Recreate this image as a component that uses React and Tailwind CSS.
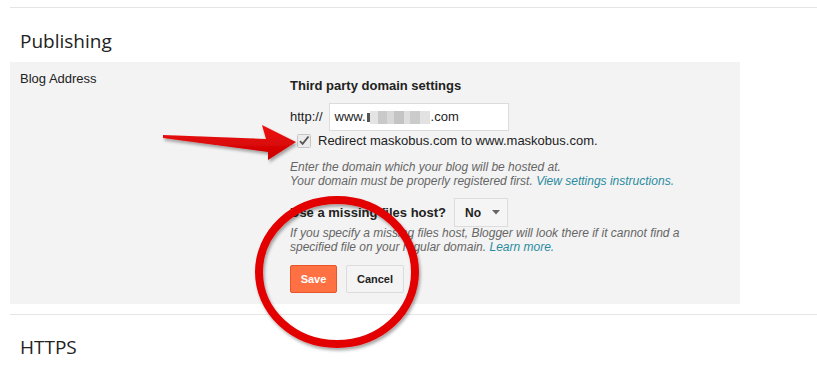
import React from 'react';

const sans = { fontFamily: '"Liberation Sans", Arial, sans-serif' };

const Blurred = () => (
    <span className="inline-flex items-center h-[13px] align-middle mx-[1px]">
        <span className="w-[3px] h-[9px] bg-[#555]" />
        <span className="w-[8px] h-[13px] bg-[#e4e4e4]" />
        <span className="w-[9px] h-[13px] bg-[#c9c9c9]" />
        <span className="w-[7px] h-[13px] bg-[#d8d8d8]" />
        <span className="w-[10px] h-[13px] bg-[#c4c4c4]" />
        <span className="w-[6px] h-[13px] bg-[#dedede]" />
        <span className="w-[10px] h-[13px] bg-[#cbcbcb]" />
        <span className="w-[10px] h-[13px] bg-[#e2e2e2]" />
    </span>
);

const CheckBox = () => (
    <svg width="14" height="14" viewBox="0 0 14 14" className="shrink-0">
        <rect x="0.5" y="0.5" width="13" height="13" rx="1" fill="#ececec" stroke="#c6c6c6" />
        <path d="M3 7.2 L5.6 9.8 L11.5 2.5" fill="none" stroke="#555" strokeWidth="1.8" />
    </svg>
);

const Annotations = () => (
    <svg className="absolute inset-0 pointer-events-none" width="817" height="375" viewBox="0 0 817 375">
        <defs>
            <filter id="sh" x="-20%" y="-20%" width="140%" height="140%">
                <feDropShadow dx="1.5" dy="2.5" stdDeviation="1.5" floodColor="#000" floodOpacity="0.35" />
            </filter>
            <linearGradient id="ar" x1="0" y1="0" x2="0" y2="1">
                <stop offset="0" stopColor="#f01010" />
                <stop offset="1" stopColor="#c80000" />
            </linearGradient>
        </defs>
        <path
            d="M163 135 L266 139 L262 125 L296 142 L268 160 L268 152 L163 138 Z"
            fill="url(#ar)"
            filter="url(#sh)"
        />
        <ellipse cx="337" cy="272" rx="78" ry="72" fill="none" stroke="#e20000" strokeWidth="8" filter="url(#sh)" />
    </svg>
);

const App = () => {
    return (
        <div className="relative w-[817px] h-[375px] bg-white overflow-hidden text-[#222]" style={sans}>
            <div className="pt-[7px] pl-[10px]">
                <div className="border-t border-[#e5e5e5]" />
            </div>

            <h2 className="pl-[20px] pt-[19px] h-[54px] text-[19px] text-[#222]" style={{ fontFamily: '"Open Sans", sans-serif' }}>
                Publishing
            </h2>

            <div className="ml-[10px] w-[730px] h-[242px] bg-[#f3f3f3] flex">
                <div className="w-[280px] pl-[10px] pt-[9px] text-[13px] leading-[16px]">Blog Address</div>

                <div className="flex flex-col pt-[16px] text-[13px] leading-[16px] text-[#222]">
                    <div className="font-bold">Third party domain settings</div>

                    <div className="flex items-center mt-[9px] gap-[6px]">
                        <span className="text-[#222]">http://</span>
                        <div className="w-[180px] h-[28px] bg-white border border-[#dcdcdc] flex items-center pl-[5px] text-[13px]">
                            <span>www.</span>
                            <Blurred />
                            <span>.com</span>
                        </div>
                    </div>

                    <div className="flex items-center mt-[2px] ml-[7px] gap-[7px] h-[16px]">
                        <CheckBox />
                        <span>Redirect maskobus.com to www.maskobus.com.</span>
                    </div>

                    <div className="mt-[11px] text-[12px] leading-[14px] italic text-[#666]">
                        <div>Enter the domain which your blog will be hosted at.</div>
                        <div>
                            Your domain must be properly registered first.{' '}
                            <span className="text-[#2a8ba0]">View settings instructions.</span>
                        </div>
                    </div>

                    <div className="flex items-center mt-[10px] gap-[8px]">
                        <span className="font-bold">Use a missing files host?</span>
                        <div className="w-[54px] h-[29px] border border-[#dcdcdc] bg-[#f5f5f5] flex items-center pl-[10px] gap-[11px]">
                            <span className="font-bold text-[12px]">No</span>
                            <svg width="8" height="5" viewBox="0 0 8 5">
                                <path d="M0 0 L8 0 L4 4.5 Z" fill="#666" />
                            </svg>
                        </div>
                    </div>

                    <div className="mt-[-1px] text-[12px] leading-[14px] italic text-[#666] w-[410px]">
                        If you specify a missing files host, Blogger will look there if it cannot find a specified file on your regular domain.{' '}
                        <span className="text-[#2a8ba0]">Learn more.</span>
                    </div>

                    <div className="flex mt-[11px] gap-[9px]">
                        <button className="w-[47px] h-[28px] bg-[#ff7043] border border-[#e8552b] rounded-[2px] text-white text-[11px] font-bold">
                            Save
                        </button>
                        <button className="w-[58px] h-[28px] bg-[#f4f4f4] border border-[#dcdcdc] rounded-[2px] text-[#222] text-[11px] font-bold">
                            Cancel
                        </button>
                    </div>
                </div>
            </div>

            <div className="pt-[10px] pl-[10px]">
                <div className="border-t border-[#e5e5e5]" />
            </div>

            <h2 className="pl-[20px] pt-[18px] text-[19px] text-[#222]" style={{ fontFamily: '"Open Sans", sans-serif' }}>
                HTTPS
            </h2>

            <Annotations />
        </div>
    );
};

export default App;
